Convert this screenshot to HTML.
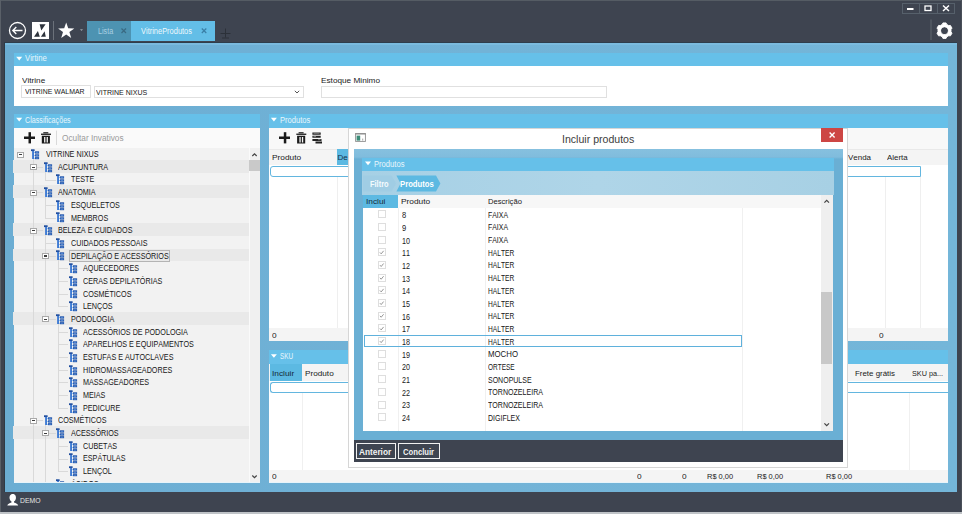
<!DOCTYPE html><html><head><meta charset="utf-8"><style>
*{margin:0;padding:0;box-sizing:border-box}
html,body{width:962px;height:514px;overflow:hidden;background:#3e4450;font-family:"Liberation Sans", sans-serif}
.t{position:absolute;white-space:nowrap;line-height:1.6;font-kerning:none}
svg{position:absolute;overflow:visible}
</style></head><body>
<div style="position:absolute;left:0px;top:0px;width:962px;height:1px;background:#555c64"></div>
<div style="position:absolute;left:0px;top:0px;width:1px;height:514px;background:#5a6068"></div>
<div style="position:absolute;left:961px;top:0px;width:1px;height:514px;background:#4a5059"></div>
<div style="position:absolute;left:0px;top:512px;width:962px;height:2px;background:#bfc3c7"></div>
<svg style="left:0;top:0" width="962" height="50"><circle cx="17.5" cy="30.5" r="8" fill="none" stroke="#fff" stroke-width="1.3"/><path d="M12.8 30.5 H22.5 M16.3 27 L12.8 30.5 L16.3 34" fill="none" stroke="#fff" stroke-width="1.3"/><rect x="32" y="22" width="17" height="17" fill="#fff"/><path d="M34 36.7 L37.9 30.9 L39.8 36.7 Z M40.9 36.7 L44.6 31.3 L45.8 36.7 Z M39.6 24.3 L45.6 24.3 L41.3 30.5 Z" fill="#2d333c"/><rect x="53" y="21" width="1" height="19" fill="#6b717a"/><path d="M66.2 22.5 L68.2 28.3 L74.3 28.4 L69.4 32.1 L71.2 38 L66.2 34.5 L61.2 38 L63 32.1 L58.1 28.4 L64.2 28.3 Z" fill="#fff"/><path d="M80 29.3 L83 29.3 L81.5 31 Z" fill="#9aa0a8"/><path d="M225.5 28.5 V37.5 M220.5 33.5 H230.5 M222 38 H229" stroke="#2c3139" stroke-width="1" fill="none"/><rect x="902.5" y="3.5" width="52" height="10" fill="none" stroke="#56606b" stroke-width="1"/><path d="M919.5 3.5 V13.5 M937.5 3.5 V13.5" stroke="#56606b" stroke-width="1"/><rect x="907" y="8" width="6.5" height="2" fill="#fff"/><rect x="925" y="6" width="6" height="4.5" fill="none" stroke="#fff" stroke-width="1.3"/><path d="M943 5.5 L949 11 M949 5.5 L943 11" stroke="#fff" stroke-width="1.5"/><rect x="930.5" y="19.5" width="1" height="20.5" fill="#5f666e"/></svg>
<svg style="left:0;top:0" width="962" height="50"><path fill-rule="evenodd" fill="#fff" stroke="#fff" stroke-width="0.9" stroke-linejoin="round" d="M942.20 24.46 L942.94 22.91 L946.06 22.91 L946.80 24.46 L948.71 25.56 L950.43 25.43 L951.99 28.13 L951.01 29.55 L951.01 31.75 L951.99 33.17 L950.43 35.87 L948.71 35.74 L946.80 36.84 L946.06 38.39 L942.94 38.39 L942.20 36.84 L940.29 35.74 L938.57 35.87 L937.01 33.17 L937.99 31.75 L937.99 29.55 L937.01 28.13 L938.57 25.43 L940.29 25.56 Z M948.2 30.65 A3.7 3.7 0 1 0 940.8 30.65 A3.7 3.7 0 1 0 948.2 30.65 Z"/><circle cx="944.5" cy="30.65" r="3.25" fill="#3e4450"/></svg>
<div style="position:absolute;left:87px;top:21px;width:44px;height:20px;background:#4d93b2"></div>
<div class="t" style="left:97.8px;top:25.28px;font-size:8.3px;color:#a9d0e2;font-weight:normal;transform:scaleX(0.8670);transform-origin:0 0;">Lista</div>
<svg style="left:0;top:0" width="300" height="50"><path d="M121.5 28.5 L126 33 M126 28.5 L121.5 33" stroke="#3a6a82" stroke-width="1.2"/></svg>
<div style="position:absolute;left:131px;top:21px;width:84px;height:20px;background:#63bee7"></div>
<div class="t" style="left:141px;top:25.48px;font-size:8.3px;color:#eef8fc;font-weight:normal;transform:scaleX(0.8989);transform-origin:0 0;">VitrineProdutos</div>
<svg style="left:0;top:0" width="300" height="50"><path d="M201.8 28.5 L206.3 33 M206.3 28.5 L201.8 33" stroke="#3a7fa5" stroke-width="1.2"/></svg>
<div style="position:absolute;left:5px;top:42px;width:952px;height:1px;background:#2f3d4b"></div>
<div style="position:absolute;left:5px;top:43px;width:952px;height:449px;background:linear-gradient(90deg,#6badd3,#72b3d7 50%,#74b6d9)"></div>
<div style="position:absolute;left:4px;top:42px;width:1px;height:450px;background:#2f3a46"></div>
<div style="position:absolute;left:5px;top:43px;width:952px;height:2px;background:#7dbde0;opacity:0.8"></div>
<div style="position:absolute;left:14px;top:52.6px;width:934px;height:13.4px;background:#66c0e9"></div>
<svg style="left:0;top:0" width="1" height="1"><path d="M16.2 56.8 L22.2 56.8 L19.2 60.4 Z" fill="#fff"/></svg>
<div class="t" style="left:25.4px;top:51.88px;font-size:8.3px;color:#e8f6fc;font-weight:normal;transform:scaleX(0.9264);transform-origin:0 0;">Virtine</div>
<div style="position:absolute;left:14px;top:66px;width:934px;height:39.5px;background:#fff"></div>
<div class="t" style="left:21.6px;top:74.53px;font-size:8px;color:#1a1a1a;font-weight:normal;transform:scaleX(1.0226);transform-origin:0 0;">Vitrine</div>
<div style="position:absolute;left:21.2px;top:85.3px;width:70px;height:12.7px;background:#fff;border:1px solid #e0e0e0;overflow:hidden"><div class="t" style="left:3.2px;top:-0.27px;font-size:8px;color:#161616;transform:scaleX(0.865);transform-origin:0 0">VITRINE WALMAR</div></div>
<div style="position:absolute;left:94px;top:85.5px;width:209.5px;height:12.5px;background:#fff;border:1px solid #e0e0e0"></div>
<div class="t" style="left:96px;top:86.83px;font-size:8px;color:#161616;font-weight:normal;transform:scaleX(0.8792);transform-origin:0 0;">VITRINE NIXUS</div>
<svg style="left:0;top:0" width="1" height="1"><path d="M294.8 90.8 L297 93 L299.2 90.8" fill="none" stroke="#555" stroke-width="1"/></svg>
<div class="t" style="left:320.5px;top:74.53px;font-size:8px;color:#1a1a1a;font-weight:normal;transform:scaleX(1.0286);transform-origin:0 0;">Estoque Minimo</div>
<div style="position:absolute;left:320.5px;top:85.5px;width:286.5px;height:12.5px;background:#fff;border:1px solid #e0e0e0"></div>
<div style="position:absolute;left:14px;top:113.8px;width:246px;height:14.2px;background:#66c0e9"></div>
<svg style="left:0;top:0" width="1" height="1"><path d="M16.2 117.8 L22.2 117.8 L19.2 121.39999999999999 Z" fill="#fff"/></svg>
<div class="t" style="left:24.9px;top:114.08px;font-size:8.3px;color:#e8f6fc;font-weight:normal;transform:scaleX(0.8618);transform-origin:0 0;">Classificações</div>
<div style="position:absolute;left:14px;top:128px;width:246px;height:20px;background:#fafafa"></div>
<svg style="left:0;top:0" width="1" height="1"><rect x="24" y="136.5" width="11" height="2.5" fill="#1a1a1a"/><rect x="28.5" y="132.2" width="2.5" height="11.2" fill="#1a1a1a"/><rect x="43.3" y="132.2" width="5" height="1.2" fill="#1a1a1a"/><rect x="41" y="133.6" width="10" height="1.3" fill="#1a1a1a"/><path d="M41.8 135.7 H49.9 V143.6 H41.8 Z M44.1 136.9 V142.6 H45.4 V136.9 Z M46.6 136.9 V142.6 H47.9 V136.9 Z" fill="#1a1a1a" fill-rule="evenodd"/><rect x="56" y="130.6" width="1" height="14.4" fill="#dadada"/></svg>
<div class="t" style="left:62.4px;top:132.08px;font-size:8.3px;color:#9a9a9a;font-weight:normal;transform:scaleX(0.9968);transform-origin:0 0;">Ocultar Invativos</div>
<div style="position:absolute;left:14px;top:148px;width:235px;height:335px;background:#f2f2f2;overflow:hidden"></div>
<div style="position:absolute;left:249px;top:148px;width:11px;height:335px;background:#f0f0f0;border-left:1px solid #fafafa"></div>
<div style="position:absolute;left:249px;top:160px;width:11px;height:11px;background:#c9c9c9"></div>
<svg style="left:0;top:0" width="1" height="1"><path d="M252.3 156 L254.5 153.8 L256.7 156" fill="none" stroke="#444" stroke-width="1.2"/><path d="M252.3 475.5 L254.5 477.7 L256.7 475.5" fill="none" stroke="#444" stroke-width="1.2"/></svg>
<div style="position:absolute;left:14px;top:482px;width:246px;height:1px;background:#e8f4fa"></div>
<div style="position:absolute;left:269px;top:113.8px;width:679px;height:14.5px;background:#66c0e9"></div>
<svg style="left:0;top:0" width="1" height="1"><path d="M270.9 117.8 L276.9 117.8 L273.9 121.39999999999999 Z" fill="#fff"/></svg>
<div class="t" style="left:280px;top:114.18px;font-size:8.3px;color:#e8f6fc;font-weight:normal;transform:scaleX(0.9121);transform-origin:0 0;">Produtos</div>
<div style="position:absolute;left:269px;top:128.3px;width:679px;height:20.3px;background:#f8f8f8"></div>
<svg style="left:0;top:0" width="1" height="1"><rect x="279" y="136.5" width="11" height="2.5" fill="#1a1a1a"/><rect x="283.8" y="132.2" width="2.5" height="11.2" fill="#1a1a1a"/><rect x="298.6" y="132.2" width="5" height="1.2" fill="#1a1a1a"/><rect x="296.3" y="133.6" width="10" height="1.3" fill="#1a1a1a"/><path d="M297.1 135.7 H305.2 V143.6 H297.1 Z M299.40000000000003 136.9 V142.6 H300.7 V136.9 Z M301.90000000000003 136.9 V142.6 H303.2 V136.9 Z" fill="#1a1a1a" fill-rule="evenodd"/><path d="M312.4 132.4 H320.7 V134.8 H312.4 Z M312.4 135.8 H320.7 V137.8 H312.4 Z M312.4 138.9 H321.5 V140.9 H312.4 Z M315.5 141.5 H322 V143.5 H315.5 Z" fill="#222"/><path d="M313.5 133.3 H319.5 M313.5 136.6 H316 M318 139.7 H320.5" stroke="#bbb" stroke-width="0.6"/></svg>
<div style="position:absolute;left:269px;top:148.6px;width:679px;height:16px;background:#f4f4f4;border-top:1px solid #e9e9e9"></div>
<div style="position:absolute;left:337px;top:148.6px;width:12px;height:16px;background:#5cb9e2"></div>
<div class="t" style="left:272px;top:151.93px;font-size:8px;color:#1a1a1a;font-weight:normal;transform:scaleX(1.0417);transform-origin:0 0;">Produto</div>
<div class="t" style="left:337.5px;top:151.93px;font-size:8px;color:#163348;font-weight:normal;">De</div>
<div style="position:absolute;left:269px;top:164.6px;width:679px;height:163.5px;background:#fff"></div>
<div style="position:absolute;left:884.5px;top:177px;width:1px;height:151px;background:#efefef"></div>
<div style="position:absolute;left:337px;top:177px;width:1px;height:151px;background:#efefef"></div>
<div style="position:absolute;left:920px;top:177px;width:1px;height:151px;background:#efefef"></div>
<div style="position:absolute;left:270px;top:165.5px;width:651px;height:11.5px;border:1.2px solid #63b6df;border-radius:3px 0 0 3px;background:#fff"></div>
<div class="t" style="left:848px;top:151.93px;font-size:8px;color:#1a1a1a;font-weight:normal;transform:scaleX(0.9939);transform-origin:0 0;">Venda</div>
<div class="t" style="left:887px;top:151.93px;font-size:8px;color:#1a1a1a;font-weight:normal;transform:scaleX(0.9854);transform-origin:0 0;">Alerta</div>
<div style="position:absolute;left:269px;top:328px;width:679px;height:13.3px;background:#f4f4f4"></div>
<div class="t" style="left:272px;top:330.13px;font-size:8px;color:#1a1a1a;font-weight:normal;transform:scaleX(1.0330);transform-origin:0 0;">0</div>
<div class="t" style="left:878.6px;top:330.13px;font-size:8px;color:#1a1a1a;font-weight:normal;transform:scaleX(1.0330);transform-origin:0 0;">0</div>
<div style="position:absolute;left:269px;top:350.4px;width:679px;height:14px;background:#66c0e9"></div>
<svg style="left:0;top:0" width="1" height="1"><path d="M270.9 354.2 L276.9 354.2 L273.9 357.8 Z" fill="#fff"/></svg>
<div class="t" style="left:280.1px;top:349.88px;font-size:8.3px;color:#e8f6fc;font-weight:normal;transform:scaleX(0.7678);transform-origin:0 0;">SKU</div>
<div style="position:absolute;left:269px;top:364.4px;width:679px;height:16.3px;background:#f4f4f4"></div>
<div style="position:absolute;left:269.8px;top:364.4px;width:32px;height:16.3px;background:#5cb9e2"></div>
<div class="t" style="left:272px;top:368.43px;font-size:8px;color:#14293a;font-weight:normal;transform:scaleX(1.0401);transform-origin:0 0;">Incluir</div>
<div class="t" style="left:304.9px;top:368.43px;font-size:8px;color:#1a1a1a;font-weight:normal;transform:scaleX(1.0239);transform-origin:0 0;">Produto</div>
<div class="t" style="left:855.3px;top:368.43px;font-size:8px;color:#1a1a1a;font-weight:normal;transform:scaleX(0.9884);transform-origin:0 0;">Frete grátis</div>
<div class="t" style="left:911.9px;top:368.43px;font-size:8px;color:#1a1a1a;font-weight:normal;transform:scaleX(0.9051);transform-origin:0 0;">SKU pa...</div>
<div style="position:absolute;left:269px;top:380.7px;width:679px;height:89px;background:#fff"></div>
<div style="position:absolute;left:908.5px;top:393px;width:1px;height:76.5px;background:#f0f0f0"></div>
<div style="position:absolute;left:301.7px;top:393px;width:1px;height:76.5px;background:#f0f0f0"></div>
<div style="position:absolute;left:270px;top:381.7px;width:678px;height:11.5px;border:1.2px solid #63b6df;border-right:none;border-radius:3px 0 0 3px;background:#fff"></div>
<div style="position:absolute;left:269px;top:469.5px;width:679px;height:13px;background:#f4f4f4"></div>
<div class="t" style="left:272px;top:471.13px;font-size:8px;color:#1a1a1a;font-weight:normal;transform:scaleX(1.0330);transform-origin:0 0;">0</div>
<div class="t" style="left:636.9px;top:471.13px;font-size:8px;color:#1a1a1a;font-weight:normal;transform:scaleX(1.0330);transform-origin:0 0;">0</div>
<div class="t" style="left:682px;top:471.13px;font-size:8px;color:#1a1a1a;font-weight:normal;transform:scaleX(1.0330);transform-origin:0 0;">0</div>
<div class="t" style="left:706.5px;top:471.13px;font-size:8px;color:#1a1a1a;font-weight:normal;transform:scaleX(0.9311);transform-origin:0 0;">R$ 0,00</div>
<div class="t" style="left:756.6px;top:471.13px;font-size:8px;color:#1a1a1a;font-weight:normal;transform:scaleX(0.9311);transform-origin:0 0;">R$ 0,00</div>
<div class="t" style="left:825.8px;top:471.13px;font-size:8px;color:#1a1a1a;font-weight:normal;transform:scaleX(0.9311);transform-origin:0 0;">R$ 0,00</div>
<div style="position:absolute;left:269px;top:482px;width:679px;height:1px;background:#e8f4fa"></div>
<div style="position:absolute;left:13px;top:148px;width:236px;height:334px;overflow:hidden">
<div style="position:absolute;left:0.00px;top:11.98px;width:236.00px;height:12.68px;background:#e9e9e9"></div>
<div style="position:absolute;left:0.00px;top:37.34px;width:236.00px;height:12.68px;background:#e9e9e9"></div>
<div style="position:absolute;left:0.00px;top:75.38px;width:236.00px;height:12.68px;background:#e9e9e9"></div>
<div style="position:absolute;left:0.00px;top:100.74px;width:236.00px;height:12.68px;background:#e9e9e9"></div>
<div style="position:absolute;left:0.00px;top:164.14px;width:236.00px;height:12.68px;background:#e9e9e9"></div>
<div style="position:absolute;left:0.00px;top:278.26px;width:236.00px;height:12.68px;background:#e9e9e9"></div>
<div style="position:absolute;left:19.80px;top:11.00px;width:1.00px;height:8.38px;background:#d9d9d9"></div>
<div style="position:absolute;left:19.80px;top:18.88px;width:10.40px;height:1.00px;background:#d9d9d9"></div>
<div style="position:absolute;left:32.30px;top:23.68px;width:1.00px;height:8.38px;background:#d9d9d9"></div>
<div style="position:absolute;left:32.30px;top:31.56px;width:10.40px;height:1.00px;background:#d9d9d9"></div>
<div style="position:absolute;left:19.80px;top:18.88px;width:1.00px;height:25.86px;background:#d9d9d9"></div>
<div style="position:absolute;left:19.80px;top:44.24px;width:10.40px;height:1.00px;background:#d9d9d9"></div>
<div style="position:absolute;left:32.30px;top:49.04px;width:1.00px;height:8.38px;background:#d9d9d9"></div>
<div style="position:absolute;left:32.30px;top:56.92px;width:10.40px;height:1.00px;background:#d9d9d9"></div>
<div style="position:absolute;left:32.30px;top:56.92px;width:1.00px;height:13.18px;background:#d9d9d9"></div>
<div style="position:absolute;left:32.30px;top:69.60px;width:10.40px;height:1.00px;background:#d9d9d9"></div>
<div style="position:absolute;left:19.80px;top:44.24px;width:1.00px;height:38.54px;background:#d9d9d9"></div>
<div style="position:absolute;left:19.80px;top:82.28px;width:10.40px;height:1.00px;background:#d9d9d9"></div>
<div style="position:absolute;left:32.30px;top:87.08px;width:1.00px;height:8.38px;background:#d9d9d9"></div>
<div style="position:absolute;left:32.30px;top:94.96px;width:10.40px;height:1.00px;background:#d9d9d9"></div>
<div style="position:absolute;left:32.30px;top:94.96px;width:1.00px;height:13.18px;background:#d9d9d9"></div>
<div style="position:absolute;left:32.30px;top:107.64px;width:10.40px;height:1.00px;background:#d9d9d9"></div>
<div style="position:absolute;left:44.80px;top:112.44px;width:1.00px;height:8.38px;background:#d9d9d9"></div>
<div style="position:absolute;left:44.80px;top:120.32px;width:10.40px;height:1.00px;background:#d9d9d9"></div>
<div style="position:absolute;left:44.80px;top:120.32px;width:1.00px;height:13.18px;background:#d9d9d9"></div>
<div style="position:absolute;left:44.80px;top:133.00px;width:10.40px;height:1.00px;background:#d9d9d9"></div>
<div style="position:absolute;left:44.80px;top:133.00px;width:1.00px;height:13.18px;background:#d9d9d9"></div>
<div style="position:absolute;left:44.80px;top:145.68px;width:10.40px;height:1.00px;background:#d9d9d9"></div>
<div style="position:absolute;left:44.80px;top:145.68px;width:1.00px;height:13.18px;background:#d9d9d9"></div>
<div style="position:absolute;left:44.80px;top:158.36px;width:10.40px;height:1.00px;background:#d9d9d9"></div>
<div style="position:absolute;left:32.30px;top:107.64px;width:1.00px;height:63.90px;background:#d9d9d9"></div>
<div style="position:absolute;left:32.30px;top:171.04px;width:10.40px;height:1.00px;background:#d9d9d9"></div>
<div style="position:absolute;left:44.80px;top:175.84px;width:1.00px;height:8.38px;background:#d9d9d9"></div>
<div style="position:absolute;left:44.80px;top:183.72px;width:10.40px;height:1.00px;background:#d9d9d9"></div>
<div style="position:absolute;left:44.80px;top:183.72px;width:1.00px;height:13.18px;background:#d9d9d9"></div>
<div style="position:absolute;left:44.80px;top:196.40px;width:10.40px;height:1.00px;background:#d9d9d9"></div>
<div style="position:absolute;left:44.80px;top:196.40px;width:1.00px;height:13.18px;background:#d9d9d9"></div>
<div style="position:absolute;left:44.80px;top:209.08px;width:10.40px;height:1.00px;background:#d9d9d9"></div>
<div style="position:absolute;left:44.80px;top:209.08px;width:1.00px;height:13.18px;background:#d9d9d9"></div>
<div style="position:absolute;left:44.80px;top:221.76px;width:10.40px;height:1.00px;background:#d9d9d9"></div>
<div style="position:absolute;left:44.80px;top:221.76px;width:1.00px;height:13.18px;background:#d9d9d9"></div>
<div style="position:absolute;left:44.80px;top:234.44px;width:10.40px;height:1.00px;background:#d9d9d9"></div>
<div style="position:absolute;left:44.80px;top:234.44px;width:1.00px;height:13.18px;background:#d9d9d9"></div>
<div style="position:absolute;left:44.80px;top:247.12px;width:10.40px;height:1.00px;background:#d9d9d9"></div>
<div style="position:absolute;left:44.80px;top:247.12px;width:1.00px;height:13.18px;background:#d9d9d9"></div>
<div style="position:absolute;left:44.80px;top:259.80px;width:10.40px;height:1.00px;background:#d9d9d9"></div>
<div style="position:absolute;left:19.80px;top:82.28px;width:1.00px;height:190.70px;background:#d9d9d9"></div>
<div style="position:absolute;left:19.80px;top:272.48px;width:10.40px;height:1.00px;background:#d9d9d9"></div>
<div style="position:absolute;left:32.30px;top:277.28px;width:1.00px;height:8.38px;background:#d9d9d9"></div>
<div style="position:absolute;left:32.30px;top:285.16px;width:10.40px;height:1.00px;background:#d9d9d9"></div>
<div style="position:absolute;left:44.80px;top:289.96px;width:1.00px;height:8.38px;background:#d9d9d9"></div>
<div style="position:absolute;left:44.80px;top:297.84px;width:10.40px;height:1.00px;background:#d9d9d9"></div>
<div style="position:absolute;left:44.80px;top:297.84px;width:1.00px;height:13.18px;background:#d9d9d9"></div>
<div style="position:absolute;left:44.80px;top:310.52px;width:10.40px;height:1.00px;background:#d9d9d9"></div>
<div style="position:absolute;left:44.80px;top:310.52px;width:1.00px;height:13.18px;background:#d9d9d9"></div>
<div style="position:absolute;left:44.80px;top:323.20px;width:10.40px;height:1.00px;background:#d9d9d9"></div>
<div style="position:absolute;left:32.30px;top:285.16px;width:1.00px;height:51.22px;background:#d9d9d9"></div>
<div style="position:absolute;left:32.30px;top:335.88px;width:10.40px;height:1.00px;background:#d9d9d9"></div>
<div style="position:absolute;left:19.80px;top:272.48px;width:1.00px;height:62.52px;background:#d9d9d9"></div>
<div style="position:absolute;left:32.30px;top:335.88px;width:1.00px;height:-0.88px;background:#d9d9d9"></div>
<div style="position:absolute;left:4.30px;top:3.50px;width:7.00px;height:6.00px;background:#fff;border:1px solid #a9a9a9"></div>
<div style="position:absolute;left:6.10px;top:5.90px;width:3.20px;height:1.20px;background:#3c3c3c"></div>
<svg style="left:18.20px;top:0.00px" width="9" height="12"><rect x="0" y="1.3" width="3.6" height="1.8" fill="#1c4a9c"/><rect x="1.1" y="2.8" width="1.9" height="8.2" fill="#3f7bd3"/><rect x="3" y="4.1" width="1" height="0.9" fill="#8cbcf0"/><rect x="3" y="7.1" width="1" height="0.9" fill="#8cbcf0"/><rect x="3" y="9.9" width="1" height="0.9" fill="#8cbcf0"/><rect x="4" y="3.3" width="4.1" height="2.3" fill="#2456ab"/><rect x="4" y="6.3" width="4.1" height="2.3" fill="#2456ab"/><rect x="4" y="9.1" width="4.1" height="2.1" fill="#2456ab"/><rect x="4.8" y="4.1" width="2.5" height="0.7" fill="#5f95de"/><rect x="4.8" y="7.1" width="2.5" height="0.7" fill="#5f95de"/><rect x="4.8" y="9.8" width="2.5" height="0.7" fill="#5f95de"/></svg>
<div class="t" style="left:32.50px;top:0.10px;font-size:8.2px;color:#161616;transform:scaleX(0.88);transform-origin:0 0">VITRINE NIXUS</div>
<div style="position:absolute;left:16.80px;top:16.18px;width:7.00px;height:6.00px;background:#fff;border:1px solid #a9a9a9"></div>
<div style="position:absolute;left:18.60px;top:18.58px;width:3.20px;height:1.20px;background:#3c3c3c"></div>
<svg style="left:30.70px;top:12.68px" width="9" height="12"><rect x="0" y="1.3" width="3.6" height="1.8" fill="#1c4a9c"/><rect x="1.1" y="2.8" width="1.9" height="8.2" fill="#3f7bd3"/><rect x="3" y="4.1" width="1" height="0.9" fill="#8cbcf0"/><rect x="3" y="7.1" width="1" height="0.9" fill="#8cbcf0"/><rect x="3" y="9.9" width="1" height="0.9" fill="#8cbcf0"/><rect x="4" y="3.3" width="4.1" height="2.3" fill="#2456ab"/><rect x="4" y="6.3" width="4.1" height="2.3" fill="#2456ab"/><rect x="4" y="9.1" width="4.1" height="2.1" fill="#2456ab"/><rect x="4.8" y="4.1" width="2.5" height="0.7" fill="#5f95de"/><rect x="4.8" y="7.1" width="2.5" height="0.7" fill="#5f95de"/><rect x="4.8" y="9.8" width="2.5" height="0.7" fill="#5f95de"/></svg>
<div class="t" style="left:45.00px;top:12.78px;font-size:8.2px;color:#161616;transform:scaleX(0.88);transform-origin:0 0">ACUPUNTURA</div>
<svg style="left:43.20px;top:25.36px" width="9" height="12"><rect x="0" y="1.3" width="3.6" height="1.8" fill="#1c4a9c"/><rect x="1.1" y="2.8" width="1.9" height="8.2" fill="#3f7bd3"/><rect x="3" y="4.1" width="1" height="0.9" fill="#8cbcf0"/><rect x="3" y="7.1" width="1" height="0.9" fill="#8cbcf0"/><rect x="3" y="9.9" width="1" height="0.9" fill="#8cbcf0"/><rect x="4" y="3.3" width="4.1" height="2.3" fill="#2456ab"/><rect x="4" y="6.3" width="4.1" height="2.3" fill="#2456ab"/><rect x="4" y="9.1" width="4.1" height="2.1" fill="#2456ab"/><rect x="4.8" y="4.1" width="2.5" height="0.7" fill="#5f95de"/><rect x="4.8" y="7.1" width="2.5" height="0.7" fill="#5f95de"/><rect x="4.8" y="9.8" width="2.5" height="0.7" fill="#5f95de"/></svg>
<div class="t" style="left:57.50px;top:25.46px;font-size:8.2px;color:#161616;transform:scaleX(0.88);transform-origin:0 0">TESTE</div>
<div style="position:absolute;left:16.80px;top:41.54px;width:7.00px;height:6.00px;background:#fff;border:1px solid #a9a9a9"></div>
<div style="position:absolute;left:18.60px;top:43.94px;width:3.20px;height:1.20px;background:#3c3c3c"></div>
<svg style="left:30.70px;top:38.04px" width="9" height="12"><rect x="0" y="1.3" width="3.6" height="1.8" fill="#1c4a9c"/><rect x="1.1" y="2.8" width="1.9" height="8.2" fill="#3f7bd3"/><rect x="3" y="4.1" width="1" height="0.9" fill="#8cbcf0"/><rect x="3" y="7.1" width="1" height="0.9" fill="#8cbcf0"/><rect x="3" y="9.9" width="1" height="0.9" fill="#8cbcf0"/><rect x="4" y="3.3" width="4.1" height="2.3" fill="#2456ab"/><rect x="4" y="6.3" width="4.1" height="2.3" fill="#2456ab"/><rect x="4" y="9.1" width="4.1" height="2.1" fill="#2456ab"/><rect x="4.8" y="4.1" width="2.5" height="0.7" fill="#5f95de"/><rect x="4.8" y="7.1" width="2.5" height="0.7" fill="#5f95de"/><rect x="4.8" y="9.8" width="2.5" height="0.7" fill="#5f95de"/></svg>
<div class="t" style="left:45.00px;top:38.14px;font-size:8.2px;color:#161616;transform:scaleX(0.88);transform-origin:0 0">ANATOMIA</div>
<svg style="left:43.20px;top:50.72px" width="9" height="12"><rect x="0" y="1.3" width="3.6" height="1.8" fill="#1c4a9c"/><rect x="1.1" y="2.8" width="1.9" height="8.2" fill="#3f7bd3"/><rect x="3" y="4.1" width="1" height="0.9" fill="#8cbcf0"/><rect x="3" y="7.1" width="1" height="0.9" fill="#8cbcf0"/><rect x="3" y="9.9" width="1" height="0.9" fill="#8cbcf0"/><rect x="4" y="3.3" width="4.1" height="2.3" fill="#2456ab"/><rect x="4" y="6.3" width="4.1" height="2.3" fill="#2456ab"/><rect x="4" y="9.1" width="4.1" height="2.1" fill="#2456ab"/><rect x="4.8" y="4.1" width="2.5" height="0.7" fill="#5f95de"/><rect x="4.8" y="7.1" width="2.5" height="0.7" fill="#5f95de"/><rect x="4.8" y="9.8" width="2.5" height="0.7" fill="#5f95de"/></svg>
<div class="t" style="left:57.50px;top:50.82px;font-size:8.2px;color:#161616;transform:scaleX(0.88);transform-origin:0 0">ESQUELETOS</div>
<svg style="left:43.20px;top:63.40px" width="9" height="12"><rect x="0" y="1.3" width="3.6" height="1.8" fill="#1c4a9c"/><rect x="1.1" y="2.8" width="1.9" height="8.2" fill="#3f7bd3"/><rect x="3" y="4.1" width="1" height="0.9" fill="#8cbcf0"/><rect x="3" y="7.1" width="1" height="0.9" fill="#8cbcf0"/><rect x="3" y="9.9" width="1" height="0.9" fill="#8cbcf0"/><rect x="4" y="3.3" width="4.1" height="2.3" fill="#2456ab"/><rect x="4" y="6.3" width="4.1" height="2.3" fill="#2456ab"/><rect x="4" y="9.1" width="4.1" height="2.1" fill="#2456ab"/><rect x="4.8" y="4.1" width="2.5" height="0.7" fill="#5f95de"/><rect x="4.8" y="7.1" width="2.5" height="0.7" fill="#5f95de"/><rect x="4.8" y="9.8" width="2.5" height="0.7" fill="#5f95de"/></svg>
<div class="t" style="left:57.50px;top:63.50px;font-size:8.2px;color:#161616;transform:scaleX(0.88);transform-origin:0 0">MEMBROS</div>
<div style="position:absolute;left:16.80px;top:79.58px;width:7.00px;height:6.00px;background:#fff;border:1px solid #a9a9a9"></div>
<div style="position:absolute;left:18.60px;top:81.98px;width:3.20px;height:1.20px;background:#3c3c3c"></div>
<svg style="left:30.70px;top:76.08px" width="9" height="12"><rect x="0" y="1.3" width="3.6" height="1.8" fill="#1c4a9c"/><rect x="1.1" y="2.8" width="1.9" height="8.2" fill="#3f7bd3"/><rect x="3" y="4.1" width="1" height="0.9" fill="#8cbcf0"/><rect x="3" y="7.1" width="1" height="0.9" fill="#8cbcf0"/><rect x="3" y="9.9" width="1" height="0.9" fill="#8cbcf0"/><rect x="4" y="3.3" width="4.1" height="2.3" fill="#2456ab"/><rect x="4" y="6.3" width="4.1" height="2.3" fill="#2456ab"/><rect x="4" y="9.1" width="4.1" height="2.1" fill="#2456ab"/><rect x="4.8" y="4.1" width="2.5" height="0.7" fill="#5f95de"/><rect x="4.8" y="7.1" width="2.5" height="0.7" fill="#5f95de"/><rect x="4.8" y="9.8" width="2.5" height="0.7" fill="#5f95de"/></svg>
<div class="t" style="left:45.00px;top:76.18px;font-size:8.2px;color:#161616;transform:scaleX(0.88);transform-origin:0 0">BELEZA E CUIDADOS</div>
<svg style="left:43.20px;top:88.76px" width="9" height="12"><rect x="0" y="1.3" width="3.6" height="1.8" fill="#1c4a9c"/><rect x="1.1" y="2.8" width="1.9" height="8.2" fill="#3f7bd3"/><rect x="3" y="4.1" width="1" height="0.9" fill="#8cbcf0"/><rect x="3" y="7.1" width="1" height="0.9" fill="#8cbcf0"/><rect x="3" y="9.9" width="1" height="0.9" fill="#8cbcf0"/><rect x="4" y="3.3" width="4.1" height="2.3" fill="#2456ab"/><rect x="4" y="6.3" width="4.1" height="2.3" fill="#2456ab"/><rect x="4" y="9.1" width="4.1" height="2.1" fill="#2456ab"/><rect x="4.8" y="4.1" width="2.5" height="0.7" fill="#5f95de"/><rect x="4.8" y="7.1" width="2.5" height="0.7" fill="#5f95de"/><rect x="4.8" y="9.8" width="2.5" height="0.7" fill="#5f95de"/></svg>
<div class="t" style="left:57.50px;top:88.86px;font-size:8.2px;color:#161616;transform:scaleX(0.88);transform-origin:0 0">CUIDADOS PESSOAIS</div>
<div style="position:absolute;left:29.30px;top:104.94px;width:7.00px;height:6.00px;background:#fff;border:1px solid #a9a9a9"></div>
<div style="position:absolute;left:31.10px;top:107.34px;width:3.20px;height:1.20px;background:#3c3c3c"></div>
<svg style="left:43.20px;top:101.44px" width="9" height="12"><rect x="0" y="1.3" width="3.6" height="1.8" fill="#1c4a9c"/><rect x="1.1" y="2.8" width="1.9" height="8.2" fill="#3f7bd3"/><rect x="3" y="4.1" width="1" height="0.9" fill="#8cbcf0"/><rect x="3" y="7.1" width="1" height="0.9" fill="#8cbcf0"/><rect x="3" y="9.9" width="1" height="0.9" fill="#8cbcf0"/><rect x="4" y="3.3" width="4.1" height="2.3" fill="#2456ab"/><rect x="4" y="6.3" width="4.1" height="2.3" fill="#2456ab"/><rect x="4" y="9.1" width="4.1" height="2.1" fill="#2456ab"/><rect x="4.8" y="4.1" width="2.5" height="0.7" fill="#5f95de"/><rect x="4.8" y="7.1" width="2.5" height="0.7" fill="#5f95de"/><rect x="4.8" y="9.8" width="2.5" height="0.7" fill="#5f95de"/></svg>
<div class="t" style="left:57.50px;top:101.54px;font-size:8.2px;color:#161616;transform:scaleX(0.88);transform-origin:0 0">DEPILAÇÃO E ACESSÓRIOS</div>
<svg style="left:55.70px;top:114.12px" width="9" height="12"><rect x="0" y="1.3" width="3.6" height="1.8" fill="#1c4a9c"/><rect x="1.1" y="2.8" width="1.9" height="8.2" fill="#3f7bd3"/><rect x="3" y="4.1" width="1" height="0.9" fill="#8cbcf0"/><rect x="3" y="7.1" width="1" height="0.9" fill="#8cbcf0"/><rect x="3" y="9.9" width="1" height="0.9" fill="#8cbcf0"/><rect x="4" y="3.3" width="4.1" height="2.3" fill="#2456ab"/><rect x="4" y="6.3" width="4.1" height="2.3" fill="#2456ab"/><rect x="4" y="9.1" width="4.1" height="2.1" fill="#2456ab"/><rect x="4.8" y="4.1" width="2.5" height="0.7" fill="#5f95de"/><rect x="4.8" y="7.1" width="2.5" height="0.7" fill="#5f95de"/><rect x="4.8" y="9.8" width="2.5" height="0.7" fill="#5f95de"/></svg>
<div class="t" style="left:70.00px;top:114.22px;font-size:8.2px;color:#161616;transform:scaleX(0.88);transform-origin:0 0">AQUECEDORES</div>
<svg style="left:55.70px;top:126.80px" width="9" height="12"><rect x="0" y="1.3" width="3.6" height="1.8" fill="#1c4a9c"/><rect x="1.1" y="2.8" width="1.9" height="8.2" fill="#3f7bd3"/><rect x="3" y="4.1" width="1" height="0.9" fill="#8cbcf0"/><rect x="3" y="7.1" width="1" height="0.9" fill="#8cbcf0"/><rect x="3" y="9.9" width="1" height="0.9" fill="#8cbcf0"/><rect x="4" y="3.3" width="4.1" height="2.3" fill="#2456ab"/><rect x="4" y="6.3" width="4.1" height="2.3" fill="#2456ab"/><rect x="4" y="9.1" width="4.1" height="2.1" fill="#2456ab"/><rect x="4.8" y="4.1" width="2.5" height="0.7" fill="#5f95de"/><rect x="4.8" y="7.1" width="2.5" height="0.7" fill="#5f95de"/><rect x="4.8" y="9.8" width="2.5" height="0.7" fill="#5f95de"/></svg>
<div class="t" style="left:70.00px;top:126.90px;font-size:8.2px;color:#161616;transform:scaleX(0.88);transform-origin:0 0">CERAS DEPILATÓRIAS</div>
<svg style="left:55.70px;top:139.48px" width="9" height="12"><rect x="0" y="1.3" width="3.6" height="1.8" fill="#1c4a9c"/><rect x="1.1" y="2.8" width="1.9" height="8.2" fill="#3f7bd3"/><rect x="3" y="4.1" width="1" height="0.9" fill="#8cbcf0"/><rect x="3" y="7.1" width="1" height="0.9" fill="#8cbcf0"/><rect x="3" y="9.9" width="1" height="0.9" fill="#8cbcf0"/><rect x="4" y="3.3" width="4.1" height="2.3" fill="#2456ab"/><rect x="4" y="6.3" width="4.1" height="2.3" fill="#2456ab"/><rect x="4" y="9.1" width="4.1" height="2.1" fill="#2456ab"/><rect x="4.8" y="4.1" width="2.5" height="0.7" fill="#5f95de"/><rect x="4.8" y="7.1" width="2.5" height="0.7" fill="#5f95de"/><rect x="4.8" y="9.8" width="2.5" height="0.7" fill="#5f95de"/></svg>
<div class="t" style="left:70.00px;top:139.58px;font-size:8.2px;color:#161616;transform:scaleX(0.88);transform-origin:0 0">COSMÉTICOS</div>
<svg style="left:55.70px;top:152.16px" width="9" height="12"><rect x="0" y="1.3" width="3.6" height="1.8" fill="#1c4a9c"/><rect x="1.1" y="2.8" width="1.9" height="8.2" fill="#3f7bd3"/><rect x="3" y="4.1" width="1" height="0.9" fill="#8cbcf0"/><rect x="3" y="7.1" width="1" height="0.9" fill="#8cbcf0"/><rect x="3" y="9.9" width="1" height="0.9" fill="#8cbcf0"/><rect x="4" y="3.3" width="4.1" height="2.3" fill="#2456ab"/><rect x="4" y="6.3" width="4.1" height="2.3" fill="#2456ab"/><rect x="4" y="9.1" width="4.1" height="2.1" fill="#2456ab"/><rect x="4.8" y="4.1" width="2.5" height="0.7" fill="#5f95de"/><rect x="4.8" y="7.1" width="2.5" height="0.7" fill="#5f95de"/><rect x="4.8" y="9.8" width="2.5" height="0.7" fill="#5f95de"/></svg>
<div class="t" style="left:70.00px;top:152.26px;font-size:8.2px;color:#161616;transform:scaleX(0.88);transform-origin:0 0">LENÇOS</div>
<div style="position:absolute;left:29.30px;top:168.34px;width:7.00px;height:6.00px;background:#fff;border:1px solid #a9a9a9"></div>
<div style="position:absolute;left:31.10px;top:170.74px;width:3.20px;height:1.20px;background:#3c3c3c"></div>
<svg style="left:43.20px;top:164.84px" width="9" height="12"><rect x="0" y="1.3" width="3.6" height="1.8" fill="#1c4a9c"/><rect x="1.1" y="2.8" width="1.9" height="8.2" fill="#3f7bd3"/><rect x="3" y="4.1" width="1" height="0.9" fill="#8cbcf0"/><rect x="3" y="7.1" width="1" height="0.9" fill="#8cbcf0"/><rect x="3" y="9.9" width="1" height="0.9" fill="#8cbcf0"/><rect x="4" y="3.3" width="4.1" height="2.3" fill="#2456ab"/><rect x="4" y="6.3" width="4.1" height="2.3" fill="#2456ab"/><rect x="4" y="9.1" width="4.1" height="2.1" fill="#2456ab"/><rect x="4.8" y="4.1" width="2.5" height="0.7" fill="#5f95de"/><rect x="4.8" y="7.1" width="2.5" height="0.7" fill="#5f95de"/><rect x="4.8" y="9.8" width="2.5" height="0.7" fill="#5f95de"/></svg>
<div class="t" style="left:57.50px;top:164.94px;font-size:8.2px;color:#161616;transform:scaleX(0.88);transform-origin:0 0">PODOLOGIA</div>
<svg style="left:55.70px;top:177.52px" width="9" height="12"><rect x="0" y="1.3" width="3.6" height="1.8" fill="#1c4a9c"/><rect x="1.1" y="2.8" width="1.9" height="8.2" fill="#3f7bd3"/><rect x="3" y="4.1" width="1" height="0.9" fill="#8cbcf0"/><rect x="3" y="7.1" width="1" height="0.9" fill="#8cbcf0"/><rect x="3" y="9.9" width="1" height="0.9" fill="#8cbcf0"/><rect x="4" y="3.3" width="4.1" height="2.3" fill="#2456ab"/><rect x="4" y="6.3" width="4.1" height="2.3" fill="#2456ab"/><rect x="4" y="9.1" width="4.1" height="2.1" fill="#2456ab"/><rect x="4.8" y="4.1" width="2.5" height="0.7" fill="#5f95de"/><rect x="4.8" y="7.1" width="2.5" height="0.7" fill="#5f95de"/><rect x="4.8" y="9.8" width="2.5" height="0.7" fill="#5f95de"/></svg>
<div class="t" style="left:70.00px;top:177.62px;font-size:8.2px;color:#161616;transform:scaleX(0.88);transform-origin:0 0">ACESSÓRIOS DE PODOLOGIA</div>
<svg style="left:55.70px;top:190.20px" width="9" height="12"><rect x="0" y="1.3" width="3.6" height="1.8" fill="#1c4a9c"/><rect x="1.1" y="2.8" width="1.9" height="8.2" fill="#3f7bd3"/><rect x="3" y="4.1" width="1" height="0.9" fill="#8cbcf0"/><rect x="3" y="7.1" width="1" height="0.9" fill="#8cbcf0"/><rect x="3" y="9.9" width="1" height="0.9" fill="#8cbcf0"/><rect x="4" y="3.3" width="4.1" height="2.3" fill="#2456ab"/><rect x="4" y="6.3" width="4.1" height="2.3" fill="#2456ab"/><rect x="4" y="9.1" width="4.1" height="2.1" fill="#2456ab"/><rect x="4.8" y="4.1" width="2.5" height="0.7" fill="#5f95de"/><rect x="4.8" y="7.1" width="2.5" height="0.7" fill="#5f95de"/><rect x="4.8" y="9.8" width="2.5" height="0.7" fill="#5f95de"/></svg>
<div class="t" style="left:70.00px;top:190.30px;font-size:8.2px;color:#161616;transform:scaleX(0.88);transform-origin:0 0">APARELHOS E EQUIPAMENTOS</div>
<svg style="left:55.70px;top:202.88px" width="9" height="12"><rect x="0" y="1.3" width="3.6" height="1.8" fill="#1c4a9c"/><rect x="1.1" y="2.8" width="1.9" height="8.2" fill="#3f7bd3"/><rect x="3" y="4.1" width="1" height="0.9" fill="#8cbcf0"/><rect x="3" y="7.1" width="1" height="0.9" fill="#8cbcf0"/><rect x="3" y="9.9" width="1" height="0.9" fill="#8cbcf0"/><rect x="4" y="3.3" width="4.1" height="2.3" fill="#2456ab"/><rect x="4" y="6.3" width="4.1" height="2.3" fill="#2456ab"/><rect x="4" y="9.1" width="4.1" height="2.1" fill="#2456ab"/><rect x="4.8" y="4.1" width="2.5" height="0.7" fill="#5f95de"/><rect x="4.8" y="7.1" width="2.5" height="0.7" fill="#5f95de"/><rect x="4.8" y="9.8" width="2.5" height="0.7" fill="#5f95de"/></svg>
<div class="t" style="left:70.00px;top:202.98px;font-size:8.2px;color:#161616;transform:scaleX(0.88);transform-origin:0 0">ESTUFAS E AUTOCLAVES</div>
<svg style="left:55.70px;top:215.56px" width="9" height="12"><rect x="0" y="1.3" width="3.6" height="1.8" fill="#1c4a9c"/><rect x="1.1" y="2.8" width="1.9" height="8.2" fill="#3f7bd3"/><rect x="3" y="4.1" width="1" height="0.9" fill="#8cbcf0"/><rect x="3" y="7.1" width="1" height="0.9" fill="#8cbcf0"/><rect x="3" y="9.9" width="1" height="0.9" fill="#8cbcf0"/><rect x="4" y="3.3" width="4.1" height="2.3" fill="#2456ab"/><rect x="4" y="6.3" width="4.1" height="2.3" fill="#2456ab"/><rect x="4" y="9.1" width="4.1" height="2.1" fill="#2456ab"/><rect x="4.8" y="4.1" width="2.5" height="0.7" fill="#5f95de"/><rect x="4.8" y="7.1" width="2.5" height="0.7" fill="#5f95de"/><rect x="4.8" y="9.8" width="2.5" height="0.7" fill="#5f95de"/></svg>
<div class="t" style="left:70.00px;top:215.66px;font-size:8.2px;color:#161616;transform:scaleX(0.88);transform-origin:0 0">HIDROMASSAGEADORES</div>
<svg style="left:55.70px;top:228.24px" width="9" height="12"><rect x="0" y="1.3" width="3.6" height="1.8" fill="#1c4a9c"/><rect x="1.1" y="2.8" width="1.9" height="8.2" fill="#3f7bd3"/><rect x="3" y="4.1" width="1" height="0.9" fill="#8cbcf0"/><rect x="3" y="7.1" width="1" height="0.9" fill="#8cbcf0"/><rect x="3" y="9.9" width="1" height="0.9" fill="#8cbcf0"/><rect x="4" y="3.3" width="4.1" height="2.3" fill="#2456ab"/><rect x="4" y="6.3" width="4.1" height="2.3" fill="#2456ab"/><rect x="4" y="9.1" width="4.1" height="2.1" fill="#2456ab"/><rect x="4.8" y="4.1" width="2.5" height="0.7" fill="#5f95de"/><rect x="4.8" y="7.1" width="2.5" height="0.7" fill="#5f95de"/><rect x="4.8" y="9.8" width="2.5" height="0.7" fill="#5f95de"/></svg>
<div class="t" style="left:70.00px;top:228.34px;font-size:8.2px;color:#161616;transform:scaleX(0.88);transform-origin:0 0">MASSAGEADORES</div>
<svg style="left:55.70px;top:240.92px" width="9" height="12"><rect x="0" y="1.3" width="3.6" height="1.8" fill="#1c4a9c"/><rect x="1.1" y="2.8" width="1.9" height="8.2" fill="#3f7bd3"/><rect x="3" y="4.1" width="1" height="0.9" fill="#8cbcf0"/><rect x="3" y="7.1" width="1" height="0.9" fill="#8cbcf0"/><rect x="3" y="9.9" width="1" height="0.9" fill="#8cbcf0"/><rect x="4" y="3.3" width="4.1" height="2.3" fill="#2456ab"/><rect x="4" y="6.3" width="4.1" height="2.3" fill="#2456ab"/><rect x="4" y="9.1" width="4.1" height="2.1" fill="#2456ab"/><rect x="4.8" y="4.1" width="2.5" height="0.7" fill="#5f95de"/><rect x="4.8" y="7.1" width="2.5" height="0.7" fill="#5f95de"/><rect x="4.8" y="9.8" width="2.5" height="0.7" fill="#5f95de"/></svg>
<div class="t" style="left:70.00px;top:241.02px;font-size:8.2px;color:#161616;transform:scaleX(0.88);transform-origin:0 0">MEIAS</div>
<svg style="left:55.70px;top:253.60px" width="9" height="12"><rect x="0" y="1.3" width="3.6" height="1.8" fill="#1c4a9c"/><rect x="1.1" y="2.8" width="1.9" height="8.2" fill="#3f7bd3"/><rect x="3" y="4.1" width="1" height="0.9" fill="#8cbcf0"/><rect x="3" y="7.1" width="1" height="0.9" fill="#8cbcf0"/><rect x="3" y="9.9" width="1" height="0.9" fill="#8cbcf0"/><rect x="4" y="3.3" width="4.1" height="2.3" fill="#2456ab"/><rect x="4" y="6.3" width="4.1" height="2.3" fill="#2456ab"/><rect x="4" y="9.1" width="4.1" height="2.1" fill="#2456ab"/><rect x="4.8" y="4.1" width="2.5" height="0.7" fill="#5f95de"/><rect x="4.8" y="7.1" width="2.5" height="0.7" fill="#5f95de"/><rect x="4.8" y="9.8" width="2.5" height="0.7" fill="#5f95de"/></svg>
<div class="t" style="left:70.00px;top:253.70px;font-size:8.2px;color:#161616;transform:scaleX(0.88);transform-origin:0 0">PEDICURE</div>
<div style="position:absolute;left:16.80px;top:269.78px;width:7.00px;height:6.00px;background:#fff;border:1px solid #a9a9a9"></div>
<div style="position:absolute;left:18.60px;top:272.18px;width:3.20px;height:1.20px;background:#3c3c3c"></div>
<svg style="left:30.70px;top:266.28px" width="9" height="12"><rect x="0" y="1.3" width="3.6" height="1.8" fill="#1c4a9c"/><rect x="1.1" y="2.8" width="1.9" height="8.2" fill="#3f7bd3"/><rect x="3" y="4.1" width="1" height="0.9" fill="#8cbcf0"/><rect x="3" y="7.1" width="1" height="0.9" fill="#8cbcf0"/><rect x="3" y="9.9" width="1" height="0.9" fill="#8cbcf0"/><rect x="4" y="3.3" width="4.1" height="2.3" fill="#2456ab"/><rect x="4" y="6.3" width="4.1" height="2.3" fill="#2456ab"/><rect x="4" y="9.1" width="4.1" height="2.1" fill="#2456ab"/><rect x="4.8" y="4.1" width="2.5" height="0.7" fill="#5f95de"/><rect x="4.8" y="7.1" width="2.5" height="0.7" fill="#5f95de"/><rect x="4.8" y="9.8" width="2.5" height="0.7" fill="#5f95de"/></svg>
<div class="t" style="left:45.00px;top:266.38px;font-size:8.2px;color:#161616;transform:scaleX(0.88);transform-origin:0 0">COSMÉTICOS</div>
<div style="position:absolute;left:29.30px;top:282.46px;width:7.00px;height:6.00px;background:#fff;border:1px solid #a9a9a9"></div>
<div style="position:absolute;left:31.10px;top:284.86px;width:3.20px;height:1.20px;background:#3c3c3c"></div>
<svg style="left:43.20px;top:278.96px" width="9" height="12"><rect x="0" y="1.3" width="3.6" height="1.8" fill="#1c4a9c"/><rect x="1.1" y="2.8" width="1.9" height="8.2" fill="#3f7bd3"/><rect x="3" y="4.1" width="1" height="0.9" fill="#8cbcf0"/><rect x="3" y="7.1" width="1" height="0.9" fill="#8cbcf0"/><rect x="3" y="9.9" width="1" height="0.9" fill="#8cbcf0"/><rect x="4" y="3.3" width="4.1" height="2.3" fill="#2456ab"/><rect x="4" y="6.3" width="4.1" height="2.3" fill="#2456ab"/><rect x="4" y="9.1" width="4.1" height="2.1" fill="#2456ab"/><rect x="4.8" y="4.1" width="2.5" height="0.7" fill="#5f95de"/><rect x="4.8" y="7.1" width="2.5" height="0.7" fill="#5f95de"/><rect x="4.8" y="9.8" width="2.5" height="0.7" fill="#5f95de"/></svg>
<div class="t" style="left:57.50px;top:279.06px;font-size:8.2px;color:#161616;transform:scaleX(0.88);transform-origin:0 0">ACESSÓRIOS</div>
<svg style="left:55.70px;top:291.64px" width="9" height="12"><rect x="0" y="1.3" width="3.6" height="1.8" fill="#1c4a9c"/><rect x="1.1" y="2.8" width="1.9" height="8.2" fill="#3f7bd3"/><rect x="3" y="4.1" width="1" height="0.9" fill="#8cbcf0"/><rect x="3" y="7.1" width="1" height="0.9" fill="#8cbcf0"/><rect x="3" y="9.9" width="1" height="0.9" fill="#8cbcf0"/><rect x="4" y="3.3" width="4.1" height="2.3" fill="#2456ab"/><rect x="4" y="6.3" width="4.1" height="2.3" fill="#2456ab"/><rect x="4" y="9.1" width="4.1" height="2.1" fill="#2456ab"/><rect x="4.8" y="4.1" width="2.5" height="0.7" fill="#5f95de"/><rect x="4.8" y="7.1" width="2.5" height="0.7" fill="#5f95de"/><rect x="4.8" y="9.8" width="2.5" height="0.7" fill="#5f95de"/></svg>
<div class="t" style="left:70.00px;top:291.74px;font-size:8.2px;color:#161616;transform:scaleX(0.88);transform-origin:0 0">CUBETAS</div>
<svg style="left:55.70px;top:304.32px" width="9" height="12"><rect x="0" y="1.3" width="3.6" height="1.8" fill="#1c4a9c"/><rect x="1.1" y="2.8" width="1.9" height="8.2" fill="#3f7bd3"/><rect x="3" y="4.1" width="1" height="0.9" fill="#8cbcf0"/><rect x="3" y="7.1" width="1" height="0.9" fill="#8cbcf0"/><rect x="3" y="9.9" width="1" height="0.9" fill="#8cbcf0"/><rect x="4" y="3.3" width="4.1" height="2.3" fill="#2456ab"/><rect x="4" y="6.3" width="4.1" height="2.3" fill="#2456ab"/><rect x="4" y="9.1" width="4.1" height="2.1" fill="#2456ab"/><rect x="4.8" y="4.1" width="2.5" height="0.7" fill="#5f95de"/><rect x="4.8" y="7.1" width="2.5" height="0.7" fill="#5f95de"/><rect x="4.8" y="9.8" width="2.5" height="0.7" fill="#5f95de"/></svg>
<div class="t" style="left:70.00px;top:304.42px;font-size:8.2px;color:#161616;transform:scaleX(0.88);transform-origin:0 0">ESPÁTULAS</div>
<svg style="left:55.70px;top:317.00px" width="9" height="12"><rect x="0" y="1.3" width="3.6" height="1.8" fill="#1c4a9c"/><rect x="1.1" y="2.8" width="1.9" height="8.2" fill="#3f7bd3"/><rect x="3" y="4.1" width="1" height="0.9" fill="#8cbcf0"/><rect x="3" y="7.1" width="1" height="0.9" fill="#8cbcf0"/><rect x="3" y="9.9" width="1" height="0.9" fill="#8cbcf0"/><rect x="4" y="3.3" width="4.1" height="2.3" fill="#2456ab"/><rect x="4" y="6.3" width="4.1" height="2.3" fill="#2456ab"/><rect x="4" y="9.1" width="4.1" height="2.1" fill="#2456ab"/><rect x="4.8" y="4.1" width="2.5" height="0.7" fill="#5f95de"/><rect x="4.8" y="7.1" width="2.5" height="0.7" fill="#5f95de"/><rect x="4.8" y="9.8" width="2.5" height="0.7" fill="#5f95de"/></svg>
<div class="t" style="left:70.00px;top:317.10px;font-size:8.2px;color:#161616;transform:scaleX(0.88);transform-origin:0 0">LENÇOL</div>
<svg style="left:43.20px;top:329.68px" width="9" height="12"><rect x="0" y="1.3" width="3.6" height="1.8" fill="#1c4a9c"/><rect x="1.1" y="2.8" width="1.9" height="8.2" fill="#3f7bd3"/><rect x="3" y="4.1" width="1" height="0.9" fill="#8cbcf0"/><rect x="3" y="7.1" width="1" height="0.9" fill="#8cbcf0"/><rect x="3" y="9.9" width="1" height="0.9" fill="#8cbcf0"/><rect x="4" y="3.3" width="4.1" height="2.3" fill="#2456ab"/><rect x="4" y="6.3" width="4.1" height="2.3" fill="#2456ab"/><rect x="4" y="9.1" width="4.1" height="2.1" fill="#2456ab"/><rect x="4.8" y="4.1" width="2.5" height="0.7" fill="#5f95de"/><rect x="4.8" y="7.1" width="2.5" height="0.7" fill="#5f95de"/><rect x="4.8" y="9.8" width="2.5" height="0.7" fill="#5f95de"/></svg>
<div class="t" style="left:57.50px;top:329.78px;font-size:8.2px;color:#161616;transform:scaleX(0.88);transform-origin:0 0">ÁCIDOS</div>
<div style="position:absolute;left:55.50px;top:102.04px;width:101.00px;height:11.60px;border:1px solid #b4b4b4"></div>
</div>
<div style="position:absolute;left:348px;top:127.7px;width:500px;height:340.5px;background:#fff;border:1px solid #d6d6d6"></div>
<svg style="left:0;top:0" width="1" height="1"><rect x="355.6" y="133.6" width="9.8" height="7.8" fill="#fff" stroke="#8f8f8f" stroke-width="0.9"/><rect x="355.2" y="133.2" width="10.6" height="1.3" fill="#8f8f8f"/><rect x="356.6" y="135.6" width="3.6" height="5" fill="#3d8c78"/><rect x="362.3" y="138.6" width="0.9" height="2" fill="#9a9a9a"/></svg>
<div class="t" style="left:561.8px;top:130.56px;font-size:10.5px;color:#3c3c3c;font-weight:normal;transform:scaleX(1.0070);transform-origin:0 0;">Incluir produtos</div>
<div style="position:absolute;left:821px;top:128px;width:22px;height:14px;background:#cd4644"></div>
<svg style="left:0;top:0" width="1" height="1"><path d="M829.6 132.6 L834.6 137.4 M834.6 132.6 L829.6 137.4" stroke="#fff" stroke-width="1.4"/></svg>
<div style="position:absolute;left:353.7px;top:148.9px;width:489px;height:291.5px;background:linear-gradient(180deg,#86c0df 0px,#80bcdd 8px,#6aafd4 10px,#6aafd4 100%)"></div>
<div style="position:absolute;left:362.3px;top:158.1px;width:471.7px;height:13.3px;background:#66c0e9"></div>
<svg style="left:0;top:0" width="1" height="1"><path d="M365 161.6 L371 161.6 L368 165.2 Z" fill="#fff"/></svg>
<div class="t" style="left:373.5px;top:157.88px;font-size:8.3px;color:#e8f6fc;font-weight:normal;transform:scaleX(0.9182);transform-origin:0 0;">Produtos</div>
<div style="position:absolute;left:362.3px;top:171.4px;width:471.7px;height:23.6px;background:linear-gradient(90deg,#a6d0e5,#afd5e8 50%,#a7d0e4)"></div>
<svg style="left:0;top:0" width="1" height="1"><path d="M363 175.5 H391.5 L396 183.5 L391.5 191.4 H363 Z" fill="#a0cde4"/><path d="M396.4 175.5 H436 L440.4 183.5 L436 191.4 H396.4 L400.5 183.5 Z" fill="#5cb9e2"/></svg>
<div class="t" style="left:369.6px;top:177.58px;font-size:8.3px;color:#f4fbfe;font-weight:bold;transform:scaleX(0.8964);transform-origin:0 0;">Filtro</div>
<div class="t" style="left:400.4px;top:177.58px;font-size:8.3px;color:#ffffff;font-weight:bold;transform:scaleX(0.9280);transform-origin:0 0;">Produtos</div>
<div style="position:absolute;left:363px;top:195px;width:470px;height:236px;background:#fff"></div>
<div style="position:absolute;left:363px;top:195px;width:458px;height:12.5px;background:#f7f7f7"></div>
<div style="position:absolute;left:363px;top:195px;width:35.4px;height:12.5px;background:#5cb9e2"></div>
<div class="t" style="left:365.9px;top:196.13px;font-size:8px;color:#14293a;font-weight:normal;transform:scaleX(1.0381);transform-origin:0 0;">Inclui</div>
<div class="t" style="left:400.8px;top:195.73px;font-size:8px;color:#1a1a1a;font-weight:normal;transform:scaleX(1.0417);transform-origin:0 0;">Produto</div>
<div class="t" style="left:488.2px;top:195.93px;font-size:8px;color:#1a1a1a;font-weight:normal;transform:scaleX(0.9528);transform-origin:0 0;">Descrição</div>
<div style="position:absolute;left:398px;top:207.6px;width:1px;height:223.4px;background:#f0f0f0"></div>
<div style="position:absolute;left:485.4px;top:207.6px;width:1px;height:223.4px;background:#f0f0f0"></div>
<div style="position:absolute;left:741.9px;top:207.6px;width:1px;height:223.4px;background:#f0f0f0"></div>
<div style="position:absolute;left:821px;top:195px;width:12px;height:236px;background:#efefef"></div>
<div style="position:absolute;left:821.2px;top:292px;width:11px;height:71.7px;background:#c8c8c8"></div>
<svg style="left:0;top:0" width="1" height="1"><path d="M824.4 202.6 L826.7 200.3 L829 202.6" fill="none" stroke="#444" stroke-width="1.2"/><path d="M824.4 423.4 L826.7 425.7 L829 423.4" fill="none" stroke="#444" stroke-width="1.2"/></svg>
<div style="position:absolute;left:377.6px;top:210.29999999999998px;width:8.2px;height:8px;background:#fff;border:1px solid #dedede"></div>
<div class="t" style="left:401.6px;top:209.20px;font-size:8.2px;color:#1a1a1a;font-weight:normal;transform:scaleX(0.9205);transform-origin:0 0;">8</div>
<div class="t" style="left:487.8px;top:208.74px;font-size:8.6px;color:#161616;font-weight:normal;transform:scaleX(0.8050);transform-origin:0 0;">FAIXA</div>
<div style="position:absolute;left:377.6px;top:222.98px;width:8.2px;height:8px;background:#fff;border:1px solid #dedede"></div>
<div class="t" style="left:401.6px;top:221.88px;font-size:8.2px;color:#1a1a1a;font-weight:normal;transform:scaleX(0.9205);transform-origin:0 0;">9</div>
<div class="t" style="left:487.8px;top:221.42px;font-size:8.6px;color:#161616;font-weight:normal;transform:scaleX(0.8050);transform-origin:0 0;">FAIXA</div>
<div style="position:absolute;left:377.6px;top:235.65999999999997px;width:8.2px;height:8px;background:#fff;border:1px solid #dedede"></div>
<div class="t" style="left:401.6px;top:234.56px;font-size:8.2px;color:#1a1a1a;font-weight:normal;transform:scaleX(0.8782);transform-origin:0 0;">10</div>
<div class="t" style="left:487.8px;top:234.10px;font-size:8.6px;color:#161616;font-weight:normal;transform:scaleX(0.8050);transform-origin:0 0;">FAIXA</div>
<div style="position:absolute;left:377.6px;top:248.33999999999997px;width:8.2px;height:8px;background:#fff;border:1px solid #dedede"></div>
<svg style="left:0;top:0" width="1" height="1"><path d="M379.9 252.44 L381.2 253.84 L383.6 250.84" fill="none" stroke="#8a8a8a" stroke-width="0.9"/></svg>
<div class="t" style="left:401.6px;top:247.24px;font-size:8.2px;color:#1a1a1a;font-weight:normal;transform:scaleX(0.8782);transform-origin:0 0;">11</div>
<div class="t" style="left:487.8px;top:246.78px;font-size:8.6px;color:#161616;font-weight:normal;transform:scaleX(0.7727);transform-origin:0 0;">HALTER</div>
<div style="position:absolute;left:377.6px;top:261.02px;width:8.2px;height:8px;background:#fff;border:1px solid #dedede"></div>
<svg style="left:0;top:0" width="1" height="1"><path d="M379.9 265.12 L381.2 266.52 L383.6 263.52" fill="none" stroke="#8a8a8a" stroke-width="0.9"/></svg>
<div class="t" style="left:401.6px;top:259.92px;font-size:8.2px;color:#1a1a1a;font-weight:normal;transform:scaleX(0.8782);transform-origin:0 0;">12</div>
<div class="t" style="left:487.8px;top:259.46px;font-size:8.6px;color:#161616;font-weight:normal;transform:scaleX(0.7727);transform-origin:0 0;">HALTER</div>
<div style="position:absolute;left:377.6px;top:273.7px;width:8.2px;height:8px;background:#fff;border:1px solid #dedede"></div>
<svg style="left:0;top:0" width="1" height="1"><path d="M379.9 277.80 L381.2 279.20 L383.6 276.20" fill="none" stroke="#8a8a8a" stroke-width="0.9"/></svg>
<div class="t" style="left:401.6px;top:272.60px;font-size:8.2px;color:#1a1a1a;font-weight:normal;transform:scaleX(0.8782);transform-origin:0 0;">13</div>
<div class="t" style="left:487.8px;top:272.14px;font-size:8.6px;color:#161616;font-weight:normal;transform:scaleX(0.7727);transform-origin:0 0;">HALTER</div>
<div style="position:absolute;left:377.6px;top:286.38px;width:8.2px;height:8px;background:#fff;border:1px solid #dedede"></div>
<svg style="left:0;top:0" width="1" height="1"><path d="M379.9 290.48 L381.2 291.88 L383.6 288.88" fill="none" stroke="#8a8a8a" stroke-width="0.9"/></svg>
<div class="t" style="left:401.6px;top:285.28px;font-size:8.2px;color:#1a1a1a;font-weight:normal;transform:scaleX(0.8782);transform-origin:0 0;">14</div>
<div class="t" style="left:487.8px;top:284.82px;font-size:8.6px;color:#161616;font-weight:normal;transform:scaleX(0.7727);transform-origin:0 0;">HALTER</div>
<div style="position:absolute;left:377.6px;top:299.06px;width:8.2px;height:8px;background:#fff;border:1px solid #dedede"></div>
<svg style="left:0;top:0" width="1" height="1"><path d="M379.9 303.16 L381.2 304.56 L383.6 301.56" fill="none" stroke="#8a8a8a" stroke-width="0.9"/></svg>
<div class="t" style="left:401.6px;top:297.96px;font-size:8.2px;color:#1a1a1a;font-weight:normal;transform:scaleX(0.8782);transform-origin:0 0;">15</div>
<div class="t" style="left:487.8px;top:297.50px;font-size:8.6px;color:#161616;font-weight:normal;transform:scaleX(0.7727);transform-origin:0 0;">HALTER</div>
<div style="position:absolute;left:377.6px;top:311.73999999999995px;width:8.2px;height:8px;background:#fff;border:1px solid #dedede"></div>
<svg style="left:0;top:0" width="1" height="1"><path d="M379.9 315.84 L381.2 317.24 L383.6 314.24" fill="none" stroke="#8a8a8a" stroke-width="0.9"/></svg>
<div class="t" style="left:401.6px;top:310.64px;font-size:8.2px;color:#1a1a1a;font-weight:normal;transform:scaleX(0.8782);transform-origin:0 0;">16</div>
<div class="t" style="left:487.8px;top:310.18px;font-size:8.6px;color:#161616;font-weight:normal;transform:scaleX(0.7727);transform-origin:0 0;">HALTER</div>
<div style="position:absolute;left:377.6px;top:324.42px;width:8.2px;height:8px;background:#fff;border:1px solid #dedede"></div>
<svg style="left:0;top:0" width="1" height="1"><path d="M379.9 328.52 L381.2 329.92 L383.6 326.92" fill="none" stroke="#8a8a8a" stroke-width="0.9"/></svg>
<div class="t" style="left:401.6px;top:323.32px;font-size:8.2px;color:#1a1a1a;font-weight:normal;transform:scaleX(0.8782);transform-origin:0 0;">17</div>
<div class="t" style="left:487.8px;top:322.86px;font-size:8.6px;color:#161616;font-weight:normal;transform:scaleX(0.7727);transform-origin:0 0;">HALTER</div>
<div style="position:absolute;left:364.4px;top:335.2px;width:377.5px;height:12.3px;border:1px solid #5fb1dc"></div>
<div style="position:absolute;left:377.6px;top:337.09999999999997px;width:8.2px;height:8px;background:#fff;border:1px solid #dedede"></div>
<svg style="left:0;top:0" width="1" height="1"><path d="M379.9 341.20 L381.2 342.60 L383.6 339.60" fill="none" stroke="#8a8a8a" stroke-width="0.9"/></svg>
<div class="t" style="left:401.6px;top:336.00px;font-size:8.2px;color:#1a1a1a;font-weight:normal;transform:scaleX(0.8782);transform-origin:0 0;">18</div>
<div class="t" style="left:487.8px;top:335.54px;font-size:8.6px;color:#161616;font-weight:normal;transform:scaleX(0.7727);transform-origin:0 0;">HALTER</div>
<div style="position:absolute;left:377.6px;top:349.78px;width:8.2px;height:8px;background:#fff;border:1px solid #dedede"></div>
<div class="t" style="left:401.6px;top:348.68px;font-size:8.2px;color:#1a1a1a;font-weight:normal;transform:scaleX(0.8782);transform-origin:0 0;">19</div>
<div class="t" style="left:487.8px;top:348.22px;font-size:8.6px;color:#161616;font-weight:normal;transform:scaleX(0.9104);transform-origin:0 0;">MOCHO</div>
<div style="position:absolute;left:377.6px;top:362.46px;width:8.2px;height:8px;background:#fff;border:1px solid #dedede"></div>
<div class="t" style="left:401.6px;top:361.36px;font-size:8.2px;color:#1a1a1a;font-weight:normal;transform:scaleX(0.8782);transform-origin:0 0;">20</div>
<div class="t" style="left:487.8px;top:360.90px;font-size:8.6px;color:#161616;font-weight:normal;transform:scaleX(0.7554);transform-origin:0 0;">ORTESE</div>
<div style="position:absolute;left:377.6px;top:375.14px;width:8.2px;height:8px;background:#fff;border:1px solid #dedede"></div>
<div class="t" style="left:401.6px;top:374.04px;font-size:8.2px;color:#1a1a1a;font-weight:normal;transform:scaleX(0.8782);transform-origin:0 0;">21</div>
<div class="t" style="left:487.8px;top:373.58px;font-size:8.6px;color:#161616;font-weight:normal;transform:scaleX(0.8150);transform-origin:0 0;">SONOPULSE</div>
<div style="position:absolute;left:377.6px;top:387.82px;width:8.2px;height:8px;background:#fff;border:1px solid #dedede"></div>
<div class="t" style="left:401.6px;top:386.72px;font-size:8.2px;color:#1a1a1a;font-weight:normal;transform:scaleX(0.8782);transform-origin:0 0;">22</div>
<div class="t" style="left:487.8px;top:386.26px;font-size:8.6px;color:#161616;font-weight:normal;transform:scaleX(0.8226);transform-origin:0 0;">TORNOZELEIRA</div>
<div style="position:absolute;left:377.6px;top:400.49999999999994px;width:8.2px;height:8px;background:#fff;border:1px solid #dedede"></div>
<div class="t" style="left:401.6px;top:399.40px;font-size:8.2px;color:#1a1a1a;font-weight:normal;transform:scaleX(0.8782);transform-origin:0 0;">23</div>
<div class="t" style="left:487.8px;top:398.94px;font-size:8.6px;color:#161616;font-weight:normal;transform:scaleX(0.8226);transform-origin:0 0;">TORNOZELEIRA</div>
<div style="position:absolute;left:377.6px;top:413.18px;width:8.2px;height:8px;background:#fff;border:1px solid #dedede"></div>
<div class="t" style="left:401.6px;top:412.08px;font-size:8.2px;color:#1a1a1a;font-weight:normal;transform:scaleX(0.8782);transform-origin:0 0;">24</div>
<div class="t" style="left:487.8px;top:411.62px;font-size:8.6px;color:#161616;font-weight:normal;transform:scaleX(0.8144);transform-origin:0 0;">DIGIFLEX</div>
<div style="position:absolute;left:353.7px;top:440.4px;width:489px;height:21.6px;background:#3e4450"></div>
<div style="position:absolute;left:356px;top:443px;width:40px;height:16.4px;border:1.6px solid #f0f0f0"></div>
<div style="position:absolute;left:398px;top:443px;width:41.5px;height:16.4px;border:1.6px solid #f0f0f0"></div>
<div class="t" style="left:359.1px;top:445.84px;font-size:8.6px;color:#f2f2f2;font-weight:bold;transform:scaleX(0.9630);transform-origin:0 0;">Anterior</div>
<div class="t" style="left:402.7px;top:445.84px;font-size:8.6px;color:#f2f2f2;font-weight:bold;transform:scaleX(0.8922);transform-origin:0 0;">Concluir</div>
<svg style="left:0;top:0" width="1" height="1"><path d="M12.8 494 C10 494 9.3 496.5 9.6 498.5 C9.9 500 10.6 501 11.5 501.6 L11.5 502.5 C9.5 503.2 7.6 504 7.3 505.5 L18.2 505.5 C17.9 504 16 503.2 14 502.5 L14 501.6 C14.9 501 15.6 500 15.9 498.5 C16.2 496.5 15.5 494 12.8 494 Z" fill="#fff"/></svg>
<div class="t" style="left:19.9px;top:494.86px;font-size:7.8px;color:#e6e6e6;font-weight:normal;transform:scaleX(0.8758);transform-origin:0 0;">DEMO</div>
</body></html>
